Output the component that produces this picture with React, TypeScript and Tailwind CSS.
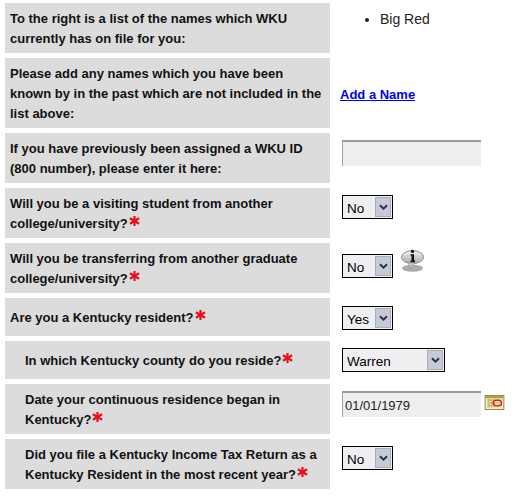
import React from "react";

function Star() {
  return (
    <svg width="11" height="12" viewBox="0 0 12 12" className="inline-block align-[1px] ml-[1px]">
      <g stroke="#e8101c" strokeWidth="2.4" strokeLinecap="butt">
        <line x1="6" y1="0.5" x2="6" y2="11.5" />
        <line x1="1" y1="3" x2="11" y2="9" />
        <line x1="11" y1="3" x2="1" y2="9" />
      </g>
    </svg>
  );
}

function Drop({ value, wide }: { value: string; wide?: boolean }) {
  return (
    <div className={`relative h-6 border border-black bg-[#efeff1] ${wide ? "w-[103px]" : "w-[51px]"}`}>
      <select
        defaultValue={value}
        className="appearance-none w-full h-full pl-[4px] pb-[2px] text-[13.5px] leading-[20px] text-black bg-transparent outline-none rounded-none"
      >
        <option>{value}</option>
      </select>
      <div className="absolute right-[1px] top-[1px] bottom-[1px] w-[16px] bg-[#c6c9d8] border border-[#a9acb9] flex items-center justify-center">
        <svg width="9" height="7" viewBox="0 0 9 7">
          <path d="M1 1.2 L4.5 4.6 L8 1.2" fill="none" stroke="#2a3344" strokeWidth="2" />
        </svg>
      </div>
    </div>
  );
}

function Field({ value = "" }: { value?: string }) {
  return (
    <input
      readOnly
      value={value}
      className="w-[139px] h-[26px] bg-[#eeeeee] border-t-2 border-l border-t-[#9a9a9a] border-l-[#a4a4a4] pl-[2px] text-[13px] text-[#222] outline-none"
    />
  );
}

function Info() {
  return (
    <svg width="25" height="25" viewBox="0 0 26 26" className="ml-[7px] -mt-[6px]">
      <defs>
        <linearGradient id="b" x1="0" y1="0" x2="0" y2="1">
          <stop offset="0" stopColor="#f2f2f2" />
          <stop offset="1" stopColor="#a9a9a9" />
        </linearGradient>
      </defs>
      <ellipse cx="13" cy="21" rx="11" ry="3.6" fill="#8f8f8f" opacity="0.75" />
      <ellipse cx="13" cy="9.5" rx="11.5" ry="6.8" fill="url(#b)" stroke="#8d8d8d" />
      <path d="M9 15 L10 21.5 L16 15.5 Z" fill="#c4c4c4" stroke="#8d8d8d" strokeWidth="0.6" />
      <circle cx="13" cy="3.6" r="1.7" fill="#111" />
      <path d="M11 6.5 H14.6 V13 H15.6 V14.8 H11 V13 H12 V8 H11 Z" fill="#111" />
    </svg>
  );
}

function Calendar() {
  return (
    <svg width="21" height="15" viewBox="0 0 21 16" className="ml-[3px] mt-[4px]">
      <rect x="0.5" y="0.5" width="20" height="15" fill="#f3ecc0" stroke="#8b8b3c" />
      <rect x="1" y="1" width="19" height="2.5" fill="#a7a54e" />
      <path d="M2.5 5.5 H18.5 M2.5 8.5 H18.5 M2.5 11.5 H18.5 M4.5 4 V13.5 M7.5 4 V13.5 M10.5 4 V13.5" stroke="#c9a063" strokeWidth="1" />
      <ellipse cx="13.5" cy="8.5" rx="4.5" ry="3" fill="none" stroke="#d11b14" strokeWidth="1.4" />
    </svg>
  );
}

function Row({
  children,
  control,
  indent,
  tall,
  pad = "pt-[7px]",
}: {
  children: React.ReactNode;
  control: React.ReactNode;
  indent?: boolean;
  tall?: boolean;
  pad?: string;
}) {
  return (
    <>
      <div
        className={`bg-[#dcdcdc] font-bold text-[13px] leading-[20px] text-[#111] ${
          indent ? "pl-5" : "pl-[5px]"
        } ${tall ? "pt-[10px] pb-[8px]" : "pt-[6px] pb-[4px]"}`}
      >
        {children}
      </div>
      <div className={`flex items-start pl-[12px] ${pad}`}>{control}</div>
    </>
  );
}

export default function App() {
  return (
    <div
      className="w-[515px] h-[496px] bg-white overflow-hidden pt-[3px] pl-[5px] grid grid-cols-[325px_185px] gap-y-[5px] content-start"
      style={{ fontFamily: '"Liberation Sans", Arial, sans-serif' }}
    >
      <Row
        pad="pt-[6px]"
        control={
          <ul className="list-disc pl-[38px] text-[14px] leading-[20px] text-[#222]">
            <li>Big Red</li>
          </ul>
        }
      >
        To the right is a list of the names which WKU
        <br />
        currently has on file for you:
      </Row>
      <Row
        control={
          <a href="#" className="-ml-[2px] mt-[20px] font-bold text-[13px] leading-[20px] text-[#0000ee] underline">
            Add a Name
          </a>
        }
      >
        Please add any names which you have been
        <br />
        known by in the past which are not included in the
        <br />
        list above:
      </Row>
      <Row control={<Field />}>
        If you have previously been assigned a WKU ID
        <br />
        (800 number), please enter it here:
      </Row>
      <Row control={<Drop value="No" />}>
        Will you be a visiting student from another
        <br />
        college/university?
        <Star />
      </Row>
      <Row
        pad="pt-[11px]"
        control={
          <>
            <Drop value="No" />
            <Info />
          </>
        }
      >
        Will you be transferring from another graduate
        <br />
        college/university?
        <Star />
      </Row>
      <Row tall pad="pt-[8px]" control={<Drop value="Yes" />}>
        Are you a Kentucky resident?
        <Star />
      </Row>
      <Row tall indent control={<Drop value="Warren" wide />}>
        In which Kentucky county do you reside?
        <Star />
      </Row>
      <Row
        indent
        control={
          <>
            <Field value="01/01/1979" />
            <Calendar />
          </>
        }
      >
        Date your continuous residence began in
        <br />
        Kentucky?
        <Star />
      </Row>
      <Row indent control={<Drop value="No" />}>
        Did you file a Kentucky Income Tax Return as a
        <br />
        Kentucky Resident in the most recent year?
        <Star />
      </Row>
    </div>
  );
}
